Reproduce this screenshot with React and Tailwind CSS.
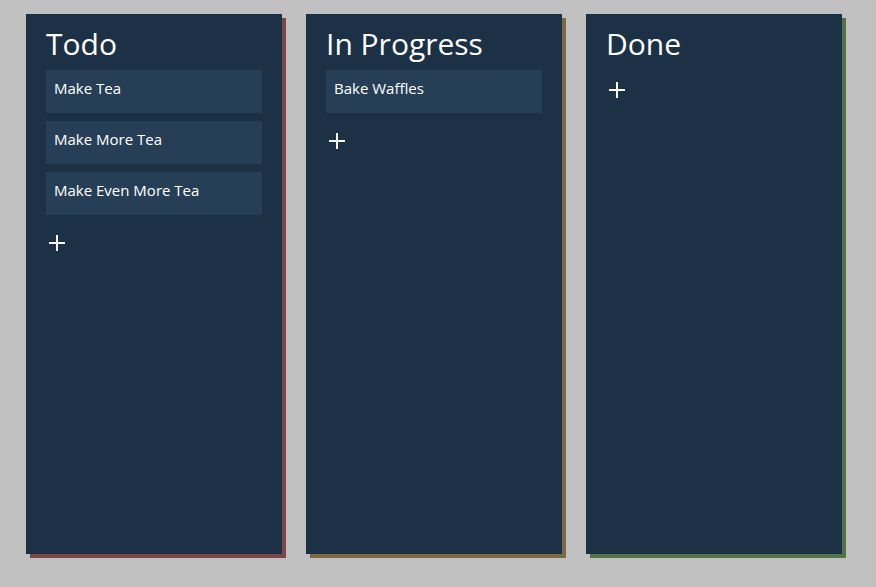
import React from "react";

const columns = [
  {
    id: "todo",
    title: "Todo",
    shadow: "shadow-[4px_4px_0_#7a4747]",
    items: ["Make Tea", "Make More Tea", "Make Even More Tea"],
  },
  {
    id: "progress",
    title: "In Progress",
    shadow: "shadow-[4px_4px_0_#7d6a45]",
    items: ["Bake Waffles"],
  },
  {
    id: "done",
    title: "Done",
    shadow: "shadow-[4px_4px_0_#4f7446]",
    items: [],
  },
];

const Plus = () => (
  <svg width="16" height="16" viewBox="0 0 16 16" className="block">
    <path d="M0 8H16M8 0V16" stroke="white" strokeWidth="2" />
  </svg>
);

const App = () => {
  return (
    <main
      className="min-h-[587px] bg-[#c0c0c0] pl-[26px] pt-[14px] flex gap-6"
      style={{ fontFamily: '"Open Sans", "Noto Sans", sans-serif' }}
    >
      {columns.map((col) => (
        <section
          key={col.id}
          className={`w-[256px] h-[540px] bg-[#1c3146] px-5 pt-[10px] flex flex-col ${col.shadow}`}
        >
          <h2 className="text-[30px] leading-[40px] text-white mb-[6px]">
            {col.title}
          </h2>
          <div className="flex flex-col gap-2">
            {col.items.map((item) => (
              <div
                key={item}
                className="h-[43px] bg-[#263f56] px-2 pt-[7px] text-[15px] leading-[22px] text-white"
              >
                {item}
              </div>
            ))}
            <button className="h-10 flex items-center pl-[3px]">
              <Plus />
            </button>
          </div>
        </section>
      ))}
    </main>
  );
};

export default App;
